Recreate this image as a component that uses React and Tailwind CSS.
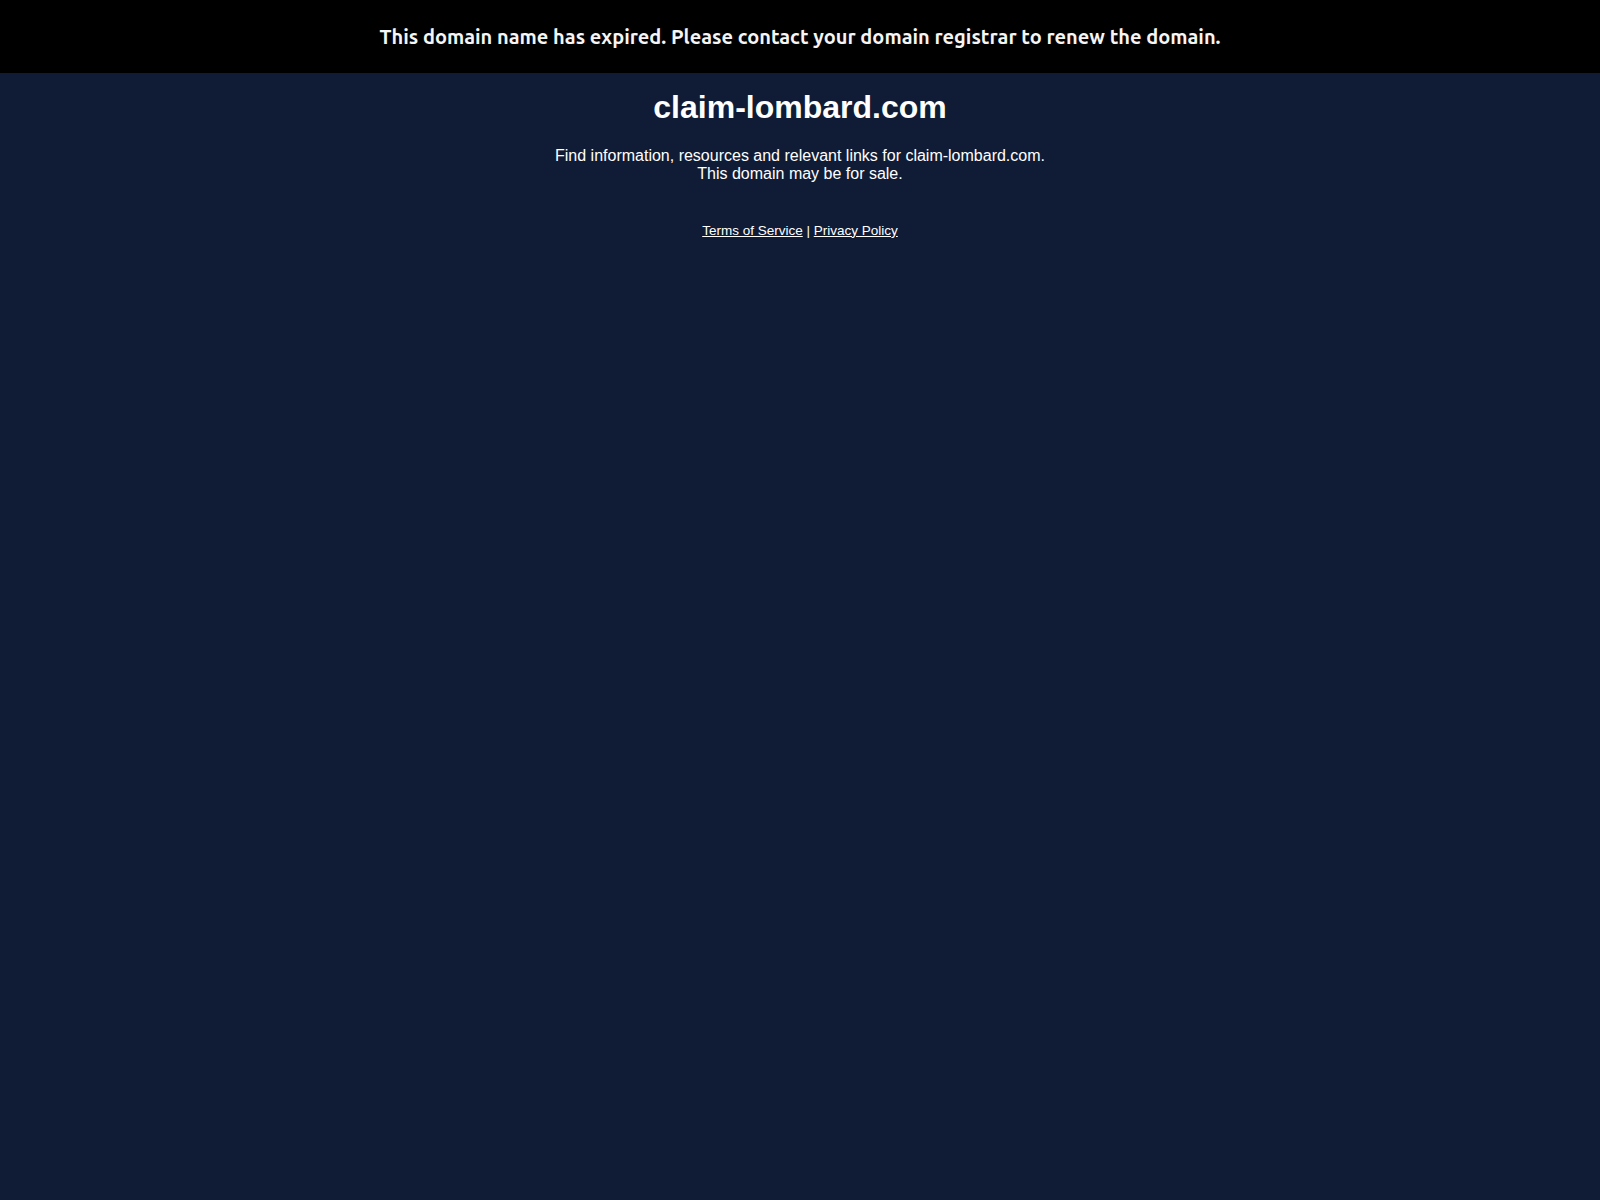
export default function App() {
  return (
    <div className="min-h-[1200px] w-full bg-[#101c36] text-white">
      <div className="flex h-[73px] items-center justify-center bg-black">
        <p className="font-['Ubuntu','Noto_Sans',sans-serif] text-[20px] font-bold text-[#f5f5f5]">
          This domain name has expired. Please contact your domain registrar to renew the domain.
        </p>
      </div>
      <div className="flex flex-col items-center font-['Liberation_Sans',Arial,sans-serif]">
        <h1 className="mt-[16px] text-[32px] font-bold leading-[37px]">claim-lombard.com</h1>
        <div className="mt-[21px] text-center text-[16px] leading-[18.4px]">
          <p>Find information, resources and relevant links for claim-lombard.com.</p>
          <p>This domain may be for sale.</p>
        </div>
        <div className="mt-[39px] text-[13.5px] leading-[15.5px]">
          <a href="#" className="underline">Terms of Service</a> | <a href="#" className="underline">Privacy Policy</a>
        </div>
      </div>
    </div>
  );
}
